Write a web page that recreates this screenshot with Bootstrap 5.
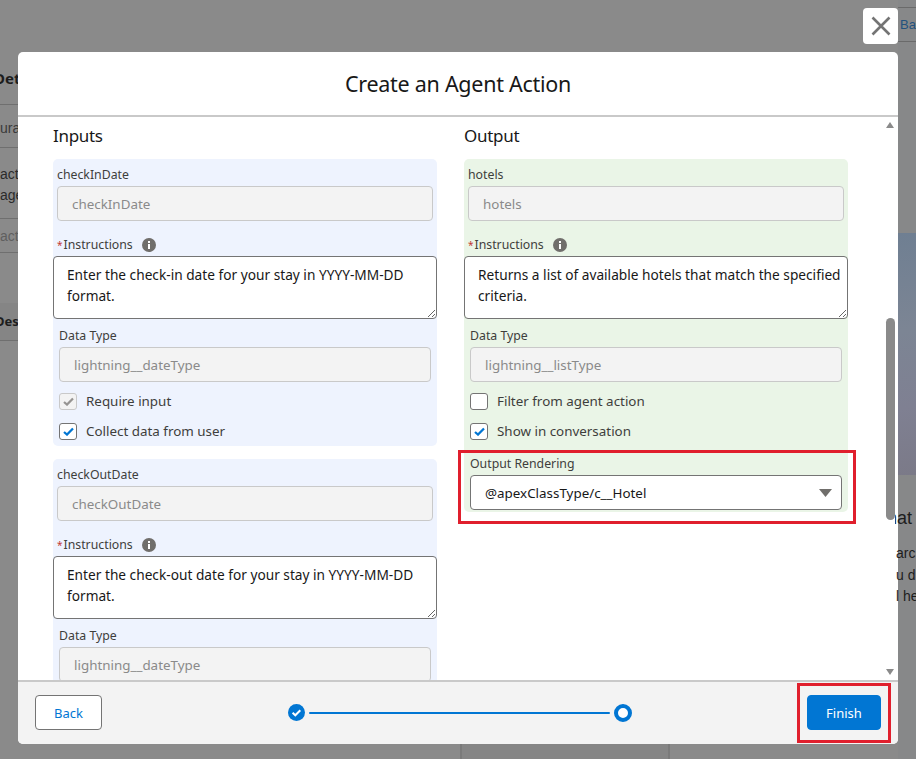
<!DOCTYPE html>
<html lang="en">
<head>
  <meta charset="UTF-8" />
  <meta name="viewport" content="width=device-width, initial-scale=1" />
  <title>Create an Agent Action</title>
  <link href="https://cdn.jsdelivr.net/npm/bootstrap@5.3.0/dist/css/bootstrap.min.css" rel="stylesheet" />
  <style>
    html, body {
      height: 759px;
      overflow: hidden;
    }
    body {
      background-color: #8a8a8a;
      font-family: "Noto Sans", "Open Sans", sans-serif;
      color: #181818;
      position: relative;
    }

    /* page behind the dim layer */
    .behind {
      height: 759px;
      font-family: "Liberation Sans", sans-serif;
      color: #1d1d1d;
    }
    .behind-left {
      width: 24px;
      padding-top: 52px;
      overflow: hidden;
      white-space: nowrap;
      font-size: 14px;
    }
    .strip-row {
      border-bottom: 1px solid #6f6f6f;
      padding-left: 0;
    }
    .strip-title { height: 53px; line-height: 53px; font-family: "Noto Sans", sans-serif; font-weight: 700; font-size: 15px; text-indent: -6px; }
    .strip-short { height: 43px; line-height: 46px; color: #3a3a3a; }
    .strip-tall { height: 71px; padding-top: 16px; line-height: 21px; color: #2b2b2b; }
    .strip-dim { height: 34px; line-height: 34px; color: #5f5f5f; margin-bottom: 50px; }
    .strip-band { height: 38px; line-height: 36px; background-color: #858585; font-family: "Noto Sans", sans-serif; font-weight: 700; font-size: 13px; text-indent: -5px; }
    .behind-mid {
      padding-top: 744px;
      padding-left: 436px;
    }
    .behind-mid div {
      width: 210px;
      height: 15px;
      border-left: 2px solid #7a7a7a;
      border-right: 2px solid #7a7a7a;
      background-color: #858585;
    }
    .behind-right {
      width: 18px;
      flex: none;
      white-space: nowrap;
      background-color: #878889;
    }
    .ghost-btn {
      height: 35px;
      margin-top: 7px;
      border-top: 1px solid #6a6a6a;
      border-bottom: 1px solid #6a6a6a;
      padding-left: 2px;
      line-height: 33px;
      font-size: 13px;
      color: #23527e;
      overflow: hidden;
    }
    .ghost-hero {
      height: 242px;
      margin-top: 191px;
      background: linear-gradient(172deg, #6f7f92 0%, #7c8594 40%, #7f8092 72%, #7b7a88 100%);
    }
    .ghost-head, .ghost-text {
      position: relative;
      z-index: 2;
      width: 21px;
      margin-left: -3px;
      overflow: hidden;
    }
    .ghost-head { font-size: 18px; margin-top: 30px; text-indent: -8px; }
    .ghost-text { font-size: 14px; line-height: 21.5px; margin-top: 11px; margin-left: -2px; width: 20px; }

    /* wizard */
    .wizard {
      position: absolute;
      left: 18px;
      top: 52px;
      width: 880px;
      height: 692px;
      border: 0;
      border-radius: 5px;
      overflow: hidden;
      --bs-modal-bg: #fff;
    }
    .wizard-head {
      height: 65px;
      flex: none;
      border-bottom: 2px solid #c9c9c9;
      font-size: 21.5px;
      letter-spacing: -.27px;
      line-height: 63px;
      text-align: center;
      color: #181818;
    }
    .wizard-body {
      flex: 1;
      min-height: 0;
      overflow: hidden;
      padding-left: 35px;
      position: relative;
      column-gap: 27px;
    }
    .io-col { width: 384px; flex: none; }
    .io-title {
      font-size: 17px;
      letter-spacing: -.3px;
      line-height: 24px;
      margin: 7px 0 11px;
      font-weight: 400;
    }
    .io-panel {
      border-radius: 5px;
      padding: 6px 0 6px;
      margin-bottom: 13px;
      font-size: 12.3px;
    }
    .io-blue { background-color: #eef3fe; }
    .io-green { background-color: #eaf5e7; }
    .fld-label {
      display: block;
      line-height: 18px;
      margin: 1px 0 2px;
      color: #3e3e3c;
    }
    .top-fld { padding: 0 4px; height: 69px; }
    .sub-fld { padding: 7px 6px 0; }
    .req { color: #c23934; margin-right: 1px; font-size: 10px; }
    .tip-dot {
      display: inline-block;
      vertical-align: -3px;
      margin-left: 9px;
    }
    .io-panel .form-control,
    .io-panel .form-select {
      height: 35px;
      padding: 0 14px;
      font-size: 13.4px;
      border-radius: 4px;
      box-shadow: none;
    }
    .io-panel .form-control:disabled {
      background-color: #f3f3f3;
      border-color: #c9c9c9;
      color: #8a8a8a;
      opacity: 1;
    }
    .io-panel textarea.form-control {
      height: 63px;
      padding: 7px 2px 7px 13px;
      font-size: 13.7px;
      line-height: 21px;
      border: 1px solid #747474;
      color: #181818;
      background-color: #fff;
      overflow: hidden;
    }
    .io-panel .form-select {
      border-color: #747474;
      color: #181818;
      padding-top: 1px;
      background-size: 13px 8px;
      background-position: right 9px center;
      background-image: url("data:image/svg+xml,%3csvg xmlns='http://www.w3.org/2000/svg' viewBox='0 0 13 8'%3e%3cpath fill='%23706e6b' d='M0 0h13L6.5 8z'/%3e%3c/svg%3e");
    }
    .io-panel .form-check {
      margin: 0;
      padding: 0;
      min-height: 0;
      height: 17px;
      display: flex;
      align-items: center;
      gap: 9px;
    }
    .io-panel .form-check + .form-check { margin-top: 13px; }
    .checks { padding: 11px 6px 0; }
    .io-panel .form-check-input {
      float: none;
      margin: 0;
      width: 18px;
      height: 17px;
      flex: none;
      border: 1px solid #747474;
      border-radius: 3px;
      opacity: 1;
      background-color: #fff;
      background-size: 11px 9px;
    }
    .io-panel .form-check-input:checked {
      background-color: #fff;
      background-image: url("data:image/svg+xml,%3csvg xmlns='http://www.w3.org/2000/svg' viewBox='0 0 11 9'%3e%3cpath fill='none' stroke='%230176d3' stroke-width='2.2' d='M1 5l3 2.6L10 1.4'/%3e%3c/svg%3e");
    }
    .io-panel .form-check-input:disabled {
      background-color: #f3f3f3;
      border-color: #c9c9c9;
      background-image: url("data:image/svg+xml,%3csvg xmlns='http://www.w3.org/2000/svg' viewBox='0 0 11 9'%3e%3cpath fill='none' stroke='%23969492' stroke-width='2.2' d='M1 5l3 2.6L10 1.4'/%3e%3c/svg%3e");
    }
    .io-panel .form-check-label {
      opacity: 1 !important;
      color: #3e3e3c;
      line-height: 17px;
      font-size: 13.4px;
    }
    .render-fld { padding: 14px 6px 2px; }
    .io-green-tail { margin-bottom: 0; padding-bottom: 0; }

    .wizard-foot {
      height: 64px;
      flex: none;
      border-top: 2px solid #c9c9c9;
      background-color: #f3f3f3;
      padding: 0 17px 1px;
    }
    .btn-back, .btn-finish {
      height: 35px;
      padding: 2px 0 0;
      font-size: 13px;
      border-radius: 4px;
    }
    .btn-back {
      width: 67px;
      background-color: #fff;
      border: 1px solid #747474;
      color: #0176d3;
    }
    .btn-finish {
      width: 74px;
      background-color: #0176d3;
      border: 1px solid #0176d3;
      color: #fff;
    }
    .stepper { width: 344px; margin-left: 10px; }
    .step-line {
      flex: 1;
      height: 2px;
      margin: 0 4px;
      background-color: #0176d3;
      border-radius: 2px;
    }
    .step-ring {
      width: 18px;
      height: 18px;
      border: 4px solid #0176d3;
      border-radius: 50%;
      background-color: #fff;
    }

    /* things that sit on top */
    .fake-scroll {
      position: absolute;
      right: 3px;
      top: 0;
      bottom: 0;
      width: 9px;
    }
    .arrow-up, .arrow-down {
      position: absolute;
      left: 0;
      width: 0;
      height: 0;
      border-left: 4.5px solid transparent;
      border-right: 4.5px solid transparent;
    }
    .arrow-up { top: 5px; border-bottom: 6px solid #8a8a8a; }
    .arrow-down { bottom: 5px; border-top: 6px solid #8a8a8a; }
    .thumb {
      position: absolute;
      left: 0;
      top: 201px;
      width: 9px;
      height: 202px;
      background-color: #8a8a8a;
      border-radius: 5px;
    }
    .close-x {
      position: absolute;
      left: 863px;
      top: 8px;
      width: 35px;
      height: 36px;
      padding: 0;
      background-color: #fff;
      border: 0;
      border-radius: 4px;
      z-index: 3;
    }
    .mark-box {
      position: absolute;
      border: 3px solid #e01f2d;
      z-index: 3;
      pointer-events: none;
    }
    .mark-render { left: 458px; top: 450px; width: 398px; height: 74px; }
    .mark-finish { left: 797px; top: 683px; width: 94px; height: 60px; }
  </style>
</head>
<body>
  <div class="behind d-flex">
    <div class="behind-left flex-shrink-0">
      <div class="strip-row strip-title">Det</div>
      <div class="strip-row strip-short">urat</div>
      <div class="strip-row strip-tall">acti<br />age</div>
      <div class="strip-row strip-dim">act</div>
      <div class="strip-row strip-band">Des</div>
    </div>
    <div class="behind-mid flex-grow-1"><div></div></div>
    <div class="behind-right">
      <div class="ghost-btn">Ba</div>
      <div class="ghost-hero"></div>
      <div class="ghost-head">nat</div>
      <div class="ghost-text">arc<br />u d<br />l he</div>
    </div>
  </div>

  <button type="button" class="close-x d-flex align-items-center justify-content-center" aria-label="Close">
    <svg width="20" height="20" viewBox="0 0 20 20"><path d="M1.5 1.5l17 17M18.5 1.5l-17 17" stroke="#747474" stroke-width="2.6" fill="none" /></svg>
  </button>

  <div class="wizard modal-content d-flex flex-column">
    <div class="wizard-head">Create an Agent Action</div>

    <div class="wizard-body d-flex align-items-start">
      <div class="io-col">
        <h2 class="io-title">Inputs</h2>

        <div class="io-panel io-blue">
          <div class="top-fld">
            <label class="fld-label">checkInDate</label>
            <input class="form-control" type="text" value="checkInDate" disabled />
          </div>
          <label class="fld-label ms-1"><span class="req">*</span>Instructions<svg class="tip-dot" width="14" height="14" viewBox="0 0 14 14"><circle cx="7" cy="7" r="7" fill="#706e6b" /><rect x="6" y="6" width="2" height="5" fill="#fff" /><rect x="6" y="3" width="2" height="2" fill="#fff" /></svg></label>
          <textarea class="form-control" readonly>Enter the check-in date for your stay in YYYY-MM-DD format.</textarea>
          <div class="sub-fld">
            <label class="fld-label">Data Type</label>
            <input class="form-control" type="text" value="lightning__dateType" disabled />
          </div>
          <div class="checks">
            <div class="form-check">
              <input class="form-check-input" type="checkbox" id="req1" checked disabled />
              <label class="form-check-label" for="req1">Require input</label>
            </div>
            <div class="form-check">
              <input class="form-check-input" type="checkbox" id="col1" checked />
              <label class="form-check-label" for="col1">Collect data from user</label>
            </div>
          </div>
        </div>

        <div class="io-panel io-blue">
          <div class="top-fld">
            <label class="fld-label">checkOutDate</label>
            <input class="form-control" type="text" value="checkOutDate" disabled />
          </div>
          <label class="fld-label ms-1"><span class="req">*</span>Instructions<svg class="tip-dot" width="14" height="14" viewBox="0 0 14 14"><circle cx="7" cy="7" r="7" fill="#706e6b" /><rect x="6" y="6" width="2" height="5" fill="#fff" /><rect x="6" y="3" width="2" height="2" fill="#fff" /></svg></label>
          <textarea class="form-control" readonly>Enter the check-out date for your stay in YYYY-MM-DD format.</textarea>
          <div class="sub-fld">
            <label class="fld-label">Data Type</label>
            <input class="form-control" type="text" value="lightning__dateType" disabled />
          </div>
        </div>
      </div>

      <div class="io-col">
        <h2 class="io-title">Output</h2>

        <div class="io-panel io-green io-green-tail">
          <div class="top-fld">
            <label class="fld-label">hotels</label>
            <input class="form-control" type="text" value="hotels" disabled />
          </div>
          <label class="fld-label ms-1"><span class="req">*</span>Instructions<svg class="tip-dot" width="14" height="14" viewBox="0 0 14 14"><circle cx="7" cy="7" r="7" fill="#706e6b" /><rect x="6" y="6" width="2" height="5" fill="#fff" /><rect x="6" y="3" width="2" height="2" fill="#fff" /></svg></label>
          <textarea class="form-control" readonly>Returns a list of available hotels that match the specified criteria.</textarea>
          <div class="sub-fld">
            <label class="fld-label">Data Type</label>
            <input class="form-control" type="text" value="lightning__listType" disabled />
          </div>
          <div class="checks">
            <div class="form-check">
              <input class="form-check-input" type="checkbox" id="flt1" />
              <label class="form-check-label" for="flt1">Filter from agent action</label>
            </div>
            <div class="form-check">
              <input class="form-check-input" type="checkbox" id="shw1" checked />
              <label class="form-check-label" for="shw1">Show in conversation</label>
            </div>
          </div>
          <div class="render-fld">
            <label class="fld-label">Output Rendering</label>
            <select class="form-select">
              <option>@apexClassType/c__Hotel</option>
            </select>
          </div>
        </div>
      </div>

      <div class="fake-scroll">
        <span class="arrow-up"></span>
        <span class="thumb"></span>
        <span class="arrow-down"></span>
      </div>
    </div>

    <div class="wizard-foot d-flex align-items-center justify-content-between">
      <button type="button" class="btn btn-back">Back</button>
      <div class="stepper d-flex align-items-center">
        <svg width="17" height="17" viewBox="0 0 17 17"><circle cx="8.5" cy="8.5" r="8.5" fill="#0176d3" /><path d="M4.6 8.8l2.7 2.5 5-5" fill="none" stroke="#fff" stroke-width="2" /></svg>
        <span class="step-line"></span>
        <span class="step-ring"></span>
      </div>
      <button type="button" class="btn btn-finish">Finish</button>
    </div>
  </div>

  <div class="mark-box mark-render"></div>
  <div class="mark-box mark-finish"></div>

  <script src="https://cdn.jsdelivr.net/npm/bootstrap@5.3.0/dist/js/bootstrap.bundle.min.js"></script>
</body>
</html>
